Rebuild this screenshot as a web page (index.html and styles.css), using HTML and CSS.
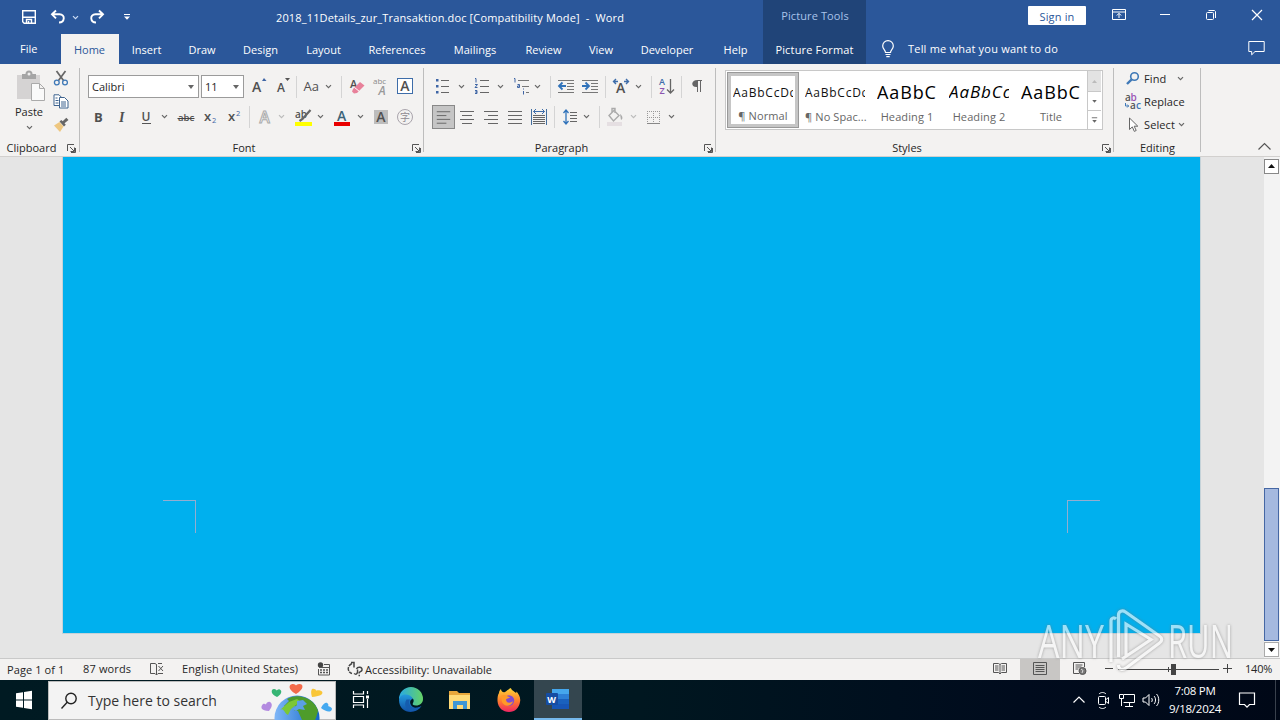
FILE: index.html
```html
<!DOCTYPE html>
<html lang="en">
<head>
<meta charset="utf-8">
<title>2018_11Details_zur_Transaktion.doc - Word</title>
<link rel="stylesheet" href="styles.css">
</head>
<body>
<svg class="defs" width="0" height="0">
  <symbol id="chev" viewBox="0 0 9 9"><path d="M2 3.200 4.500 5.700 7 3.200" fill="none" stroke="currentColor" stroke-width="1.200"/></symbol>
  <symbol id="launch" viewBox="0 0 9 9"><path d="M.5 7V.5H7M3 3l4 4M7.500 3.500v4h-4M8.500 4v4.500H4" fill="none" stroke="#555"/></symbol>
</svg>
<div class="app">
<header class="titlebar">
  <div class="qat">
    <svg width="16" height="16" viewBox="0 0 16 16" fill="none" stroke="#fff" stroke-width="1.400"><path d="M1.700 1.700h12.600v12.600H3.200L1.700 12.800zM1.700 8.300h12.600"/><path d="M5.500 14v-3.500h5V14M7.500 14v-2" /></svg>
    <svg width="16" height="16" viewBox="0 0 16 16" fill="none" stroke="#fff" stroke-width="1.900"><path d="M6 1.500 2 5.300 6 9.300M2.300 5.300H9.500c6.300 0 5.200 8.200-.5 8.200"/></svg>
    <svg class="ch" width="9" height="9"><use href="#chev"/></svg>
    <svg width="16" height="16" viewBox="0 0 16 16" fill="none" stroke="#fff" stroke-width="1.900"><path d="M10 1.500 14 5.300 10 9.300M13.700 5.300H6.500c-6.300 0-5.200 8.200.5 8.200"/></svg>
    <svg width="8" height="8" viewBox="0 0 8 8"><path d="M1 1.500h6" stroke="#fff"/><path d="M1 3.500h6L4 6.800z" fill="#fff"/></svg>
  </div>
  <div class="doc-title">2018_11Details_zur_Transaktion.doc [Compatibility Mode]&nbsp; -&nbsp; Word</div>
  <div class="tools-title">Picture Tools</div>
  <div class="signin"><span>Sign in</span></div>
  <div class="win">
    <svg width="14" height="12" viewBox="0 0 14 12" fill="none" stroke="#fff"><path d="M.5.5h13v10H.5zM.5 3h13M7 9V4.500M4.800 6.500 7 4.300l2.200 2.200"/></svg>
    <svg width="12" height="12" viewBox="0 0 12 12" stroke="#fff"><path d="M1 5.500h10"/></svg>
    <svg width="12" height="12" viewBox="0 0 12 12" fill="none" stroke="#fff"><rect x="1.500" y="3.500" width="7" height="7" rx="1"/><path d="M3.500 1.500h6l1 1v6.500"/></svg>
    <svg width="12" height="12" viewBox="0 0 12 12" stroke="#fff" stroke-width="1.200"><path d="M1 1l10 10M11 1 1 11"/></svg>
  </div>
</header>
<nav class="tabs">
  <span class="file">File</span><span class="active">Home</span><span>Insert</span><span>Draw</span><span>Design</span><span>Layout</span><span>References</span><span>Mailings</span><span>Review</span><span>View</span><span>Developer</span><span>Help</span><span class="ctx">Picture Format</span>
  <svg class="bulb" width="14" height="18" viewBox="0 0 14 18" fill="none" stroke="#fff" stroke-width="1.200"><path d="M4.500 12.500C4.500 10 1.700 9 1.700 5.900a5.300 5.300 0 0 1 10.600 0c0 3.100-2.800 4.100-2.800 6.600zM4.500 14.500h5M5.300 16.600h3.400"/></svg>
  <span class="tell">Tell me what you want to do</span>
  <svg class="comment" width="17" height="16" viewBox="0 0 17 16" fill="none" stroke="#fff"><path d="M.8 1.500h15.400v10H7L3.700 14.800v-3.300H.8z"/></svg>
</nav>
<section class="ribbon">
  <div class="group g-clip">
    <div class="clip">
      <div class="paste">
        <svg width="30" height="32" viewBox="0 0 30 32"><path d="M2 5h23v24H2z" fill="#d5d3d3"/><path d="M7 4h3.500a3.500 3.500 0 0 1 7 0H21v5H7z" fill="#a5a5a5"/><circle cx="14" cy="4" r="1.500" fill="#eee"/><path d="M16.500 13.500h8l5 5v12h-13zM24.500 13.500v5h5" fill="#fafafa" stroke="#aaa"/></svg>
        <span>Paste</span>
        <svg class="ch" width="9" height="9"><use href="#chev"/></svg>
      </div>
      <div class="clip-icons">
        <svg width="16" height="16" viewBox="0 0 16 16" fill="none"><path d="m3.500 1 7 9.500M12.500 1l-7 9.500" stroke="#666" stroke-width="1.700"/><circle cx="3.800" cy="12.500" r="2.400" stroke="#3f79b7" stroke-width="1.300"/><circle cx="12" cy="12.500" r="2.400" stroke="#3f79b7" stroke-width="1.300"/></svg>
        <svg width="16" height="15" viewBox="0 0 16 15" fill="#fff" stroke="#3f648f"><path d="M1 .8h5l3 3v7.700H1z"/><path d="M6.500 3.500h5l3.500 3.500v7H6.500z"/><path d="M2.500 4h2M2.500 6.500h3M2.500 9h3M8 8h5M8 10h5M8 12h5" fill="none"/></svg>
        <svg width="16" height="15" viewBox="0 0 16 15"><path d="M1 8.500 6.500 5l4 4.500L7 15z" fill="#eec780"/><path d="m6.500 4.500 4.500 5 1.800-1.800-1.300-1.400L15.500 3 13.300.8 9.700 4.300 8.300 2.900z" fill="#666"/></svg>
      </div>
    </div>
    <div class="label"><span>Clipboard</span><svg width="9" height="9"><use href="#launch"/></svg></div>
  </div>
  <div class="group g-font">
    <div class="row font1">
      <div class="combo c1"><span>Calibri</span><i></i></div>
      <div class="combo c2"><span>11</span><i></i></div>
      <svg class="ic" viewBox="0 0 24 24"><text x="4" y="18" class="ga" font-size="14">A</text><path d="m14 7 2-3 2.500 3z" fill="#3e65a5"/></svg>
      <svg class="ic" viewBox="0 0 24 24"><text x="5" y="18" class="ga" font-size="12">A</text><path d="M13 4h5l-2.500 3z" fill="#555"/></svg>
      <b class="sep"></b>
      <svg class="ic" viewBox="0 0 24 24"><text x="3.500" y="17" class="ga thin" font-size="13">Aa</text></svg>
      <svg class="ch" width="9" height="9"><use href="#chev"/></svg>
      <b class="sep"></b>
      <svg class="ic" viewBox="0 0 24 24"><text x="5" y="14" class="ga" font-size="11">A</text><path d="m8 15 7-7 4.500 3.500-7.500 7.500-3 .5-2-2z" fill="#e8819a"/><path d="m9.500 13.500 5 4" stroke="#fff"/></svg>
      <svg class="ic" viewBox="0 0 24 24"><text x="4" y="10" fill="#8a8a8a" font-size="8">abc</text><text x="9.500" y="20.500" fill="#999" font-size="12" font-style="italic" font-weight="600">A</text></svg>
      <svg class="ic" viewBox="0 0 24 24"><rect x="4.500" y="4.500" width="15" height="15" fill="#fff" stroke="#3e6da9"/><text x="7.300" y="17" class="ga" font-size="14">A</text></svg>
    </div>
    <div class="row font2">
      <svg class="ic" viewBox="0 0 24 24"><text x="8" y="17" class="ga" font-size="13" style="font-weight:700">B</text></svg>
      <svg class="ic" viewBox="0 0 24 24"><text x="9" y="17" class="ga serif" font-size="14">I</text></svg>
      <svg class="ic" viewBox="0 0 24 24"><text x="7.500" y="16" class="ga" font-size="12">U</text><path d="M8 18.500h9" stroke="#555"/></svg>
      <svg class="ch" width="9" height="9"><use href="#chev"/></svg>
      <svg class="ic" viewBox="0 0 24 24"><text x="4" y="16" class="ga" font-size="9.500">abc</text><path d="M3.500 13.500h17" stroke="#444"/></svg>
      <svg class="ic" viewBox="0 0 24 24"><text x="6" y="16" class="ga" font-size="13">x</text><text x="14" y="18" fill="#3e65a5" font-size="7.500">2</text></svg>
      <svg class="ic" viewBox="0 0 24 24"><text x="6" y="16" class="ga" font-size="13">x</text><text x="14" y="11" fill="#3e65a5" font-size="7.500">2</text></svg>
      <b class="sep"></b>
      <svg class="ic" viewBox="0 0 24 24"><text x="6.500" y="17.500" fill="#fff" stroke="#aaa" font-size="15.500" font-weight="600">A</text></svg>
      <svg class="ch dim" width="9" height="9"><use href="#chev"/></svg>
      <svg class="ic" viewBox="0 0 24 24"><path d="M4 17h17v4H4z" fill="#ff0"/><text x="4" y="13" class="ga" font-size="10">ab</text><path d="m19.500 5-8 9-3 2" fill="none" stroke="#666" stroke-width="2.200"/></svg>
      <svg class="ch" width="9" height="9"><use href="#chev"/></svg>
      <svg class="ic" viewBox="0 0 24 24"><text x="7" y="15.500" fill="#3c6379" font-weight="600" font-size="14">A</text><path d="M4 17h16v4H4z" fill="#e90000"/></svg>
      <svg class="ch" width="9" height="9"><use href="#chev"/></svg>
      <svg class="ic" viewBox="0 0 24 24"><path d="M5 5h14v14H5z" fill="#bdbdbd"/><text x="7.300" y="17" class="ga" font-size="14">A</text></svg>
      <svg class="ic" viewBox="0 0 24 24"><circle cx="12" cy="12" r="7.500" fill="none" stroke="#a9a4ac"/><text x="7" y="16" class="cjk" font-size="10">字</text></svg>
    </div>
    <div class="label"><span>Font</span><svg width="9" height="9"><use href="#launch"/></svg></div>
  </div>
  <div class="group g-para">
    <div class="row para1">
      <svg class="ic" viewBox="0 0 24 24"><path d="M10 6.500h8M10 12.500h8M10 18.500h8" stroke="#666"/><path d="M5 5h2.500v2.500H5zM5 11h2.500v2.500H5zM5 17h2.500v2.500H5z" fill="#3e65a5"/></svg>
      <svg class="ch" width="9" height="9"><use href="#chev"/></svg>
      <svg class="ic" viewBox="0 0 24 24"><path d="M10 6.500h9M10 12.500h9M10 18.500h9" stroke="#666"/><path d="M5 4.500h1v4M5 10.500h2.500L5 13.500h2.500M5 16.500h2v1.500H5.500 7v1.500H5" fill="none" stroke="#3e65a5"/></svg>
      <svg class="ch" width="9" height="9"><use href="#chev"/></svg>
      <svg class="ic" viewBox="0 0 24 24"><path d="M9 6.500h11M13 12.500h7M17 18.500h3" stroke="#777"/><path d="M5 4.500h1v4M8.500 10.500h2v3h-2v-1.500h2M14.500 14.500v1M14.500 17v3.500" fill="none" stroke="#3e65a5"/></svg>
      <svg class="ch" width="9" height="9"><use href="#chev"/></svg>
      <b class="sep"></b>
      <svg class="ic" viewBox="0 0 24 24"><path d="M4 6.500h16M13 9.500h7M13 12.500h7M13 15.500h7M4 18.500h16" stroke="#777"/><path d="M12 12H5M8.500 8.500 5 12l3.500 3.500" fill="none" stroke="#3173ba" stroke-width="1.800"/></svg>
      <svg class="ic" viewBox="0 0 24 24"><path d="M4 6.500h16M13 9.500h7M13 12.500h7M13 15.500h7M4 18.500h16" stroke="#777"/><path d="M4 12h7M7.500 8.500 11 12l-3.500 3.500" fill="none" stroke="#3173ba" stroke-width="1.800"/></svg>
      <b class="sep"></b>
      <svg class="ic" viewBox="0 0 24 24"><text x="7" y="19" class="ga" font-size="14">A</text><path d="M9 7.500H4.500M7 5 4.500 7.500 7 10M15 7.500h4.500M17 5l2.500 2.500L17 10" fill="none" stroke="#3e6da9" stroke-width="1.400"/></svg>
      <svg class="ch" width="9" height="9"><use href="#chev"/></svg>
      <b class="sep"></b>
      <svg class="ic" viewBox="0 0 24 24"><g font-size="9" font-weight="600"><text x="4" y="11" fill="#3e6da9">A</text><text x="4.500" y="20" fill="#8b55b0">Z</text></g><path d="M15.500 5v14M12 15.500l3.500 3.500 3.500-3.500" fill="none" stroke="#666" stroke-width="1.300"/></svg>
      <b class="sep"></b>
      <svg class="ic" viewBox="0 0 24 24"><path d="M12 6.500h5M12.500 6v12M15.500 6v12" stroke="#666"/><path d="M12.500 6v7C5.500 14 5.500 6 12.500 6z" fill="#666"/></svg>
    </div>
    <div class="row para2">
      <svg class="ic on" viewBox="0 0 24 24"><path d="M5 6.500h14M5 10.500h10M5 14.500h14M5 18.500h10" stroke="#666"/></svg>
      <svg class="ic" viewBox="0 0 24 24"><path d="M5 6.500h14M7 10.500h10M5 14.500h14M7 18.500h10" stroke="#666"/></svg>
      <svg class="ic" viewBox="0 0 24 24"><path d="M5 6.500h14M9 10.500h10M5 14.500h14M9 18.500h10" stroke="#666"/></svg>
      <svg class="ic" viewBox="0 0 24 24"><path d="M5 6.500h14M5 10.500h14M5 14.500h14M5 18.500h14" stroke="#666"/></svg>
      <svg class="ic" viewBox="0 0 24 24"><path d="M4.500 4v16M19.500 4v16" stroke="#446f9f"/><path d="M6 10.500h12M6 12.500h12M6 14.500h12M6 16.500h12M6 18.500h12" stroke="#666"/><path d="M6.500 6.500h11M9 4 6.500 6.500 9 9M15 4l2.500 2.500L15 9" fill="none" stroke="#3e6da9"/></svg>
      <b class="sep"></b>
      <svg class="ic" viewBox="0 0 24 24"><path d="M12 7.500h7M12 10.500h7M12 13.500h7M12 16.500h7" stroke="#666"/><path d="M8 5v14M5.500 8 8 5l2.500 3M5.500 16 8 19l2.500-3" fill="none" stroke="#3173ba" stroke-width="1.300"/></svg>
      <svg class="ch" width="9" height="9"><use href="#chev"/></svg>
      <b class="sep"></b>
      <svg class="ic" viewBox="0 0 24 24"><path d="M4 17h15v4H4z" fill="#e5dfe2"/><path d="m6 10.500 5-5 5 5-5.500 5.500zM9 8V3.500h3V8" fill="none" stroke="#aaa" stroke-width="1.400"/><path d="M17 9c3 2 3 5 1 6z" fill="#aaa"/></svg>
      <svg class="ch dim" width="9" height="9"><use href="#chev"/></svg>
      <svg class="ic" viewBox="0 0 24 24"><path d="M6.500 6v11M12.500 6v11M18.500 6v11M6 6.500h13M6 12.500h13" stroke="#999" stroke-dasharray="1 1"/><path d="M6 18.500h13" stroke="#888"/></svg>
      <svg class="ch" width="9" height="9"><use href="#chev"/></svg>
    </div>
    <div class="label"><span>Paragraph</span><svg width="9" height="9"><use href="#launch"/></svg></div>
  </div>
  <div class="group g-styles">
    <div class="gallery">
      <div class="style sel"><p class="n">AaBbCcDc</p><small>¶ Normal</small></div>
      <div class="style"><p class="n">AaBbCcDc</p><small>¶ No Spac...</small></div>
      <div class="style"><p class="h">AaBbC</p><small>Heading 1</small></div>
      <div class="style"><p class="h it">AaBbCc</p><small>Heading 2</small></div>
      <div class="style"><p class="h">AaBbC</p><small>Title</small></div>
      <div class="gscroll">
        <svg class="off" viewBox="0 0 13 20"><path d="M4 12h5L6.500 9z" fill="#bbb"/></svg>
        <svg viewBox="0 0 13 20"><path d="M4 9h5l-2.500 3z" fill="#666"/></svg>
        <svg viewBox="0 0 13 20"><path d="M3.500 7.500h6" stroke="#666"/><path d="M4 10h5l-2.500 3z" fill="#666"/></svg>
      </div>
    </div>
    <div class="label"><span>Styles</span><svg width="9" height="9"><use href="#launch"/></svg></div>
  </div>
  <div class="group g-edit">
    <div class="edit">
      <svg width="16" height="16" viewBox="0 0 16 16" fill="none" stroke="#3f79b7"><circle cx="9.500" cy="5.500" r="3.800" stroke-width="1.600"/><path d="M6.700 8.300 2 13" stroke-width="2.400"/></svg><span>Find</span><svg class="ch fc" width="9" height="9"><use href="#chev"/></svg>
      <svg class="rep" width="18" height="18" viewBox="0 0 18 18" font-size="10" font-weight="600"><text x="1" y="8" fill="#555">a</text><text x="6.500" y="8" fill="#9a55b5">b</text><text x="6" y="16" fill="#555">a</text><text x="12" y="16" fill="#3f79b7">c</text><path d="M1.500 10v3h3M3.200 11.500 4.700 13l-1.500 1.500" fill="none" stroke="#3f79b7"/></svg><span>Replace</span><i></i>
      <svg width="16" height="16" viewBox="0 0 16 16"><path d="M4.500 1v11.500l2.800-2.600 2 4.500 1.900-.9-2-4.300h3.600z" fill="#fff" stroke="#666"/></svg><span>Select</span><svg class="ch sc" width="9" height="9"><use href="#chev"/></svg>
    </div>
    <div class="label"><span>Editing</span></div>
  </div>
  <svg class="collapse" width="15" height="9" viewBox="0 0 15 9"><path d="M1.500 7.500l6-6 6 6" fill="none" stroke="#555" stroke-width="1.200"/></svg>
</section>
<main class="doc">
  <div class="page"><i class="crop l"></i><i class="crop r"></i></div>
  <div class="scroll">
    <svg width="15" height="15" viewBox="0 0 15 15"><rect x=".5" y=".5" width="14" height="14" fill="#fff" stroke="#888"/><path d="M4 9h7L7.500 5z" fill="#111"/></svg>
    <div class="thumb"></div>
    <svg width="15" height="15" viewBox="0 0 15 15"><rect x=".5" y=".5" width="14" height="14" fill="#fff" stroke="#aaa"/><path d="M4 6h7l-3.500 4z" fill="#111"/></svg>
  </div>
</main>
<footer class="status">
  <span class="s1">Page 1 of 1</span><span class="s2">87 words</span>
  <svg class="s3" width="16" height="14" viewBox="0 0 16 14" fill="none" stroke="#555"><path d="M7.500 2.500 6 1.500H1.500v10H6l1.500 1.500zv10.500l1.500-1.500h5M9 1.500h4M9.500 4l4.500 5M14 4 9.500 9"/></svg>
  <span class="s4">English (United States)</span>
  <svg class="s5" width="14" height="14" viewBox="0 0 14 14"><circle cx="3.500" cy="3" r="2.700" fill="#444"/><path d="M7 2.500h5.500v10.500H1.500V7M2 5.500h10" fill="none" stroke="#555"/><path d="M3 8h9M3 10.500h9" stroke="#555" stroke-width="1.500" stroke-dasharray="2 1"/></svg>
  <svg class="s6" width="17" height="16" viewBox="0 0 17 16" fill="none" stroke="#444" stroke-width="1.500"><path d="M5 2.500C-.5 5 .5 11.500 5 12.500" stroke-dasharray="4 1"/><path d="M4 1.500h3v5M9.500 8c1-2.500 6-2.500 5.500 1-.5 2-3 1.500-3 3.500M11.500 14.500h1.500M7 12.500c3 2 4-1 3.500-4"/></svg>
  <span class="s7">Accessibility: Unavailable</span>
  <div class="views">
    <div><svg width="14" height="13" viewBox="0 0 14 13" fill="none" stroke="#555"><path d="M7 2.500 5.500 1.500h-5v9h5L7 12l1.500-1.500h5v-9h-5zV12M2 4h3.500M2 6h3.500M2 8h3.500M8.500 4H12M8.500 6H12M8.500 8H12"/></svg></div>
    <div class="cur"><svg width="14" height="13" viewBox="0 0 14 13" fill="none" stroke="#555"><path d="M.5.500h13v12H.5zM2.500 3.500h9M2.500 5.500h9M2.500 7.500h9M2.500 9.500h9"/></svg></div>
    <div><svg width="14" height="14" viewBox="0 0 14 14" fill="none" stroke="#555"><path d="M6 11.500H.5v-11h11V5M2.500 3h7M2.500 5h6M2.500 7h3"/><circle cx="9.500" cy="9" r="3.500" fill="#777"/><path d="m8 7 2 1.500L9 11" stroke="#ddd"/></svg></div>
  </div>
  <svg class="zoom" width="128" height="14" viewBox="0 0 128 14"><path d="M1 6.500h8M119 6.500h9M123.500 2v9M14 7.500h101M64.500 5v5" stroke="#444"/><path d="M67 2h5v11h-5z" fill="#444"/></svg>
  <span class="pct">140%</span>
</footer>
<div class="taskbar">
  <svg class="start" width="48" height="40" viewBox="0 0 48 40"><path d="m16 13.200 7-1v7.300h-7zM24 12l8-1.200v8.700h-8zM16 20.500h7v7.300l-7-1zM24 20.500h8v8.700L24 28z" fill="#fff"/></svg>
  <div class="search">
    <svg width="18" height="18" viewBox="0 0 18 18" fill="none" stroke="#222" stroke-width="1.400"><circle cx="11" cy="6.500" r="5.200"/><path d="M7.200 10.300 1.500 16.500"/></svg>
    <span>Type here to search</span>
    <svg class="earth" width="74" height="38" viewBox="0 0 74 38">
      <defs><linearGradient id="ea"><stop offset="0" stop-color="#80b7f7"/><stop offset="1" stop-color="#1266c9"/></linearGradient></defs>
      <circle cx="37" cy="36" r="22.500" fill="url(#ea)"/><path d="M27 17c4-3 12-4 19-1 6 2 11 8 12 13-1 4-2 7-3 9H42l-4-9c-6 0-5-3-2-5l-5-1-4 3-3-2 5-5z" fill="#4e9c2b"/><path d="m29 20 8-3 4 3-5 3-5 4-3 6c-4-2-4-8-8-5z" fill="#7cc736"/><path d="m37 19 6-1 4 4-4 2 2 4-6-1-3 2-4-2 5-4z" fill="#5b9fe6"/>
      <path d="M36 12c-9-5-7-10-3-10 2 0 3 1.500 3 1.500S37 2 39.500 2c4 0 5 5-3.500 10z" fill="#f36b4b"/>
      <path d="M17 15c-7-3-6-8-3-8 2 0 2.500 1.500 2.500 1.500S19 6 20.500 8c2 2 0 5-3.500 7z" fill="#36b574"/>
      <path d="M9 29c-8 0-9-4-6-7 2-1 3 .5 3 .5S7 19 10 20c3 2 2 5-1 9z" fill="#b38ae0"/>
      <path d="M52 15c-2-7 0-9 2-8 2 0 2 1.500 2 1.500s4-1 6 1c2 3-3 5-10 5.500z" fill="#f9c638"/>
      <path d="M61 26c3-6 6-6 7-4 1 1 0 2 0 2s4 1 4 3c-1 4-6 3-11-1z" fill="#45a9f0"/>
    </svg>
  </div>
  <div class="apps">
    <div><svg width="18" height="18" viewBox="0 0 18 18" fill="none" stroke="#fff" stroke-width="1.200"><path d="M1.500 0v3h10V0M1.500 17v-3h10v3M1.500 5.500h10v6h-10zM15.500 0v3M15.500 8v9"/><path d="M14 4.500h3v3h-3z" fill="#fff" stroke="none"/></svg></div>
    <div><svg width="26" height="26" viewBox="0 0 26 26"><defs><linearGradient id="e1"><stop offset="0" stop-color="#28a9e4"/><stop offset="1" stop-color="#65d366"/></linearGradient><linearGradient id="e2" x2="0" y2="1"><stop offset="0" stop-color="#249bdd"/><stop offset="1" stop-color="#104fa5"/></linearGradient></defs><path d="M1 12A12 12 0 0 1 25 12c0 4-3 6.500-7 6.500-3 0-4-1-3-2.500C18 11 11 7 1 12z" fill="url(#e1)"/><path d="M1 13C2 6 12 6 15 12c-4 0-4 7 1 8.500 3 .8 5 0 7.500-1.500C17 29 1 26 1 13z" fill="url(#e2)"/><path d="M8.500 12.500C5 18 9 25 15 24c3-.5 6-2 8-5-8 5-14-.5-11-6.500z" fill="#155cae"/></svg></div>
    <div><svg width="24" height="22" viewBox="0 0 24 22"><path d="M1 2h8l2 2h11v15H1z" fill="#e8a73b"/><path d="M1 6h21v14H1z" fill="#ffda77"/><path d="M5 12h14v8h-4v-4H9v4H5z" fill="#3f97d5"/></svg></div>
    <div><svg width="26" height="26" viewBox="0 0 26 26"><defs><linearGradient id="ff" x2="0" y2="1"><stop offset="0" stop-color="#ffd638"/><stop offset=".55" stop-color="#ff7b2e"/><stop offset="1" stop-color="#ef2464"/></linearGradient></defs><path d="M3 6c0-2 1-3 2-4 0 2 2 4 4 3 2-1 3-3 6-4 0 2 3 3 5 5 1-1 0-2 0-2 3 3 5 7 4 11-1 6-5 10-11 10S2 21 1.500 14c0-3 0-6 1.500-8z" fill="url(#ff)"/><circle cx="13" cy="13.500" r="5.200" fill="#824bd0"/><path d="M5 9c4-3 6 1 9 1-1 2-4 1-4 3 1 4 5 3 7 1-1 6-9 6-11 1z" fill="#ff9a28"/></svg></div>
    <div class="open"><svg width="24" height="22" viewBox="0 0 24 22"><path d="M6 1h17v20H6z" fill="#1755b5"/><path d="M6 1h17v5H6z" fill="#45a7ed"/><path d="M6 6h17v5H6z" fill="#2d80d7"/><path d="M6 11h17v5H6z" fill="#1a61bd"/><rect x="0" y="5" width="12" height="12" rx="1" fill="#164da3"/><text x="1.300" y="14.500" fill="#fff" font-size="9" font-weight="700">W</text></svg></div>
  </div>
  <div class="tray">
    <svg width="24" height="20" viewBox="0 0 24 20" fill="none" stroke="#fff" stroke-width="1.200"><path d="m6.500 12.500 5.500-5.500 5.500 5.500"/></svg>
    <svg width="24" height="20" viewBox="0 0 24 20" fill="none" stroke="#fff"><rect x="7.500" y="6.500" width="7" height="8" rx="1"/><path d="m15 9.500 2.500-2v6L15 11.500M8 4c2-2 5-2 7 0M8 17c2 2 5 2 7 0"/></svg>
    <svg width="24" height="20" viewBox="0 0 24 20" fill="none" stroke="#fff"><path d="M9 4.500h10.500v8H8.500M14.500 13v3M10 16.500h8M4.500 4.500h4v4h-4zM6.500 9v7"/></svg>
    <svg width="24" height="20" viewBox="0 0 24 20" fill="none" stroke="#fff"><path d="M4 8h2.500L10 4.500v11L6.500 12H4zM12.500 8c1 1 1 3 0 4M15 6c2 2 2 6 0 8M17.500 4c3 3 3 9 0 12"/></svg>
    <div class="clock"><span>7:08 PM</span><span>9/18/2024</span></div>
    <svg class="note" width="18" height="18" viewBox="0 0 18 18" fill="none" stroke="#fff" stroke-width="1.200"><path d="M1.500 2h15v11.500h-5L9 16.200 6.500 13.500h-5z"/></svg>
    <i class="peek"></i>
  </div>
</div>
<svg class="mark" width="204" height="70" viewBox="0 0 204 70">
  <g fill="#fff"><text x="4" y="51" font-size="46" textLength="66" lengthAdjust="spacingAndGlyphs">ANY</text><text x="134" y="51" font-size="46" textLength="65" lengthAdjust="spacingAndGlyphs">RUN</text></g>
  <path d="M77 55V14c0-3 3-4 5-2M84.500 50V8c0-4 4-5 7-3l34 24c3 2 3 5 0 7L92 61c-4 3-7.500 1-7.500-3M92 50V17l25 15.500L88 52" fill="none" stroke="#fff" stroke-width="3.200"/>
</svg>
</div>
</body>
</html>
```

FILE: styles.css
```css
* { box-sizing: border-box; }
body { margin: 0; width: 1280px; height: 720px; overflow: hidden; font: 11px/16px "Open Sans", "Noto Sans", sans-serif; color: #262626; }
svg { display: block; flex: none; }
svg text { font-family: "Open Sans", "Noto Sans", sans-serif; }
svg .ga { fill: #505050; font-weight: 600; }
svg .thin { font-weight: 400; }
svg .serif { font-family: "Liberation Serif", serif; font-style: italic; font-weight: 700; }
svg .cjk { font-family: "Noto Sans CJK SC", sans-serif; fill: #8f8a92; }
span, small, p { white-space: nowrap; }
.defs { position: absolute; }
.app { position: relative; display: grid; grid-template-rows: 34px 30px 93px 501px 22px 40px; height: 720px; }
.ch { color: #666; }
.ch.dim { color: #bbb; }

.titlebar { display: grid; grid-template-columns: 276px 487px 103px 162px 58px 194px; background: #2b579a; color: #fff; }
.titlebar > div { height: 34px; }
.qat { display: flex; align-items: center; padding-left: 21px; }
.qat svg:nth-child(2) { margin-left: 13px; }
.qat .ch { margin-left: 5px; color: #cbdcf5; }
.qat svg:nth-child(4) { margin-left: 9px; }
.qat svg:nth-child(5) { margin-left: 18px; }
.doc-title { line-height: 35px; letter-spacing: .145px; white-space: nowrap; }
.tools-title { background: #204478; color: #a9c3ea; text-align: center; line-height: 32px; padding-left: 1px; letter-spacing: .1px; }
.signin { grid-column: 5; padding-top: 6px; }
.signin span { display: block; height: 19px; line-height: 21px; background: #fff; color: #2b579a; text-align: center; border-radius: 1px; letter-spacing: .15px; }
.win { display: grid; grid-template-columns: repeat(4, 46px); justify-items: center; align-items: center; padding: 0 0 4px 10px; }

.tabs { display: grid; grid-template-columns: 61px 57px 57px 54px 63px 63px 84px 72px 65px 50px 82px 55px 103px 42px 150px 190px 32px; background: #2b579a; color: #fff; text-align: center; line-height: 31px; }
.tabs .file { text-align: left; padding-left: 20px; line-height: 29px; }
.tabs .active { background: #f3f2f1; color: #2b579a; margin-right: -1px; padding-right: 1px; }
.tabs .ctx { background: #204478; letter-spacing: .17px; }
.bulb { margin: 6px 0 0 15px; }
.tabs .tell { text-align: left; line-height: 29px; letter-spacing: .2px; }
.comment { grid-column: 17; margin-top: 6px; }

.ribbon { display: grid; grid-template-columns: 80px 344px 292px 398px 87px 1fr; background: #f3f2f1; border-bottom: 1px solid #d2d0ce; }
.group { display: flex; flex-direction: column; background: linear-gradient(#bdbdbd, #bdbdbd) right 4px / 1px 84px no-repeat; background-position: right 4px; height: 92px; }
.label { margin-top: auto; height: 16px; display: grid; grid-template-columns: 1fr 12px; align-items: center; text-align: center; }
.label svg { justify-self: start; }
.g-font .label span, .g-styles .label span { padding-right: 4px; }
.g-para .label span { padding-right: 5px; }
.row { display: grid; align-items: center; height: 31px; }
.ic { width: 24px; height: 24px; }
.on { background: #c5c5c5; outline: 1px solid #888; outline-offset: -1px; width: 23px; margin-left: 1px; }
.sep { width: 1px; height: 22px; background: #d4d4d4; justify-self: end; margin-right: 3px; }
.clip { display: flex; padding: 5px 0 0 14px; height: 70px; }
.paste { width: 30px; display: flex; flex-direction: column; align-items: center; }
.paste svg:first-child { margin: 1px 0 0 2px; }
.paste span { margin-top: 2px; }
.paste .ch { margin-top: 3px; }
.clip-icons { margin-left: 9px; display: grid; gap: 8px; align-content: start; padding-top: 1px; }
.g-clip .label { grid-template-columns: 67px 12px; }
.g-clip .label span { padding-right: 4px; }
.font1, .font2 { margin-left: 8px; }
.font1 { margin-top: 7px; grid-template-columns: 113px 47px 24px 24px 4px 24px 10px 11px 24px 24px 24px; }
.font2 { margin: -1px 0 0 6px; grid-template-columns: 24px 24px 26px 14px 24px 24px 24px 7px 24px 14px 25px 14px 26px 13px 24px 24px; }
.font1 .ic, .para1 .ic, .para1 .ch, .font1 .ch { margin-top: -1px; }
.combo { height: 23px; border: 1px solid #9b9b9b; background: #fff; display: flex; justify-content: space-between; align-items: center; padding: 0 4px 0 3px; }
.combo i { border: 3px solid transparent; border-top: 4px solid #666; border-bottom: 0; }
.c1 { width: 111px; }
.c2 { width: 43px; }
.g-para .row { margin-left: 7px; }
.para1 { margin-top: 7px; grid-template-columns: 26px 13px 26px 13px 24px 11px 10px 24px 24px 7px 25px 12px 9px 24px 6px 24px; }
.g-para .para2 { margin-top: -1px; grid-template-columns: 24px 24px 24px 24px 24px 7px 24px 12px 9px 26px 12px 26px 12px; }
.gallery { display: grid; grid-template-columns: repeat(5, 72px) 15px; margin: 6px 0 0 9px; height: 60px; width: 378px; background: #fff; border: 1px solid #c8c8c8; padding-left: 1px; }
.style { display: flex; flex-direction: column; padding: 10px 6px 0; overflow: hidden; text-align: center; }
.style p { margin: 0; height: 24px; line-height: 24px; overflow: hidden; color: #111; }
.style .n { font-size: 12px; letter-spacing: .75px; text-align: left; }
.style .h { font-size: 18px; letter-spacing: .9px; color: #000; text-align: left; margin-top: -1px; height: 25px; }
.style .it { font-style: italic; font-size: 17px; font-weight: 500; }
.style small { font-size: 11px; color: #666; margin-top: 4px; line-height: 16px; letter-spacing: .1px; }
.sel { border: 4px solid #c6c6c6; padding: 5px 2px 0; outline: 1px solid #999; outline-offset: -1px; margin-top: 1px; height: 56px; }
.gscroll { border-left: 1px solid #c8c8c8; display: grid; grid-template-rows: 21px 19px 18px; }
.gscroll svg { width: 13px; height: 100%; border-bottom: 1px solid #c8c8c8; }
.gscroll svg:last-child { border-bottom: 0; }
.gscroll .off { background: #e3e3e3; }
.edit { display: grid; grid-template-columns: 20px 45px 15px; grid-auto-rows: 23px; align-items: center; margin: 3px 0 0 10px; letter-spacing: .1px; }
.edit .rep { margin-left: 0; }
.edit .fc { margin-left: -13px; }
.edit .sc { margin-left: -12px; }
.edit .fc, .edit .sc { margin-left: -13px; }
.edit .sc { margin-left: -12px; }
.edit svg:first-child, .edit svg:nth-child(7) { margin-left: 1px; }
.g-edit .label { grid-template-columns: 1fr; }
.collapse { align-self: end; margin: 0 0 5px 56px; }

.doc { background: #e5e5e5; display: flex; }
.page { margin-left: 62px; width: 1139px; height: 477px; background: #00b0ee; border: 1px solid #c5d2d8; border-top: 0; display: flex; justify-content: space-between; padding: 343px 100px 0; }
.crop { width: 33px; height: 33px; border-top: 1px solid #94add0; }
.crop.l { border-right: 1px solid #94add0; }
.crop.r { border-left: 1px solid #94add0; }
.scroll { margin-left: 63px; width: 16px; background: #f3f3f3; padding-top: 2px; display: flex; flex-direction: column; }
.thumb { margin-top: 314px; width: 15px; height: 153px; margin-bottom: 1px; background: #a5b9df; border: 1px solid #4567a4; }

.status { display: flex; align-items: center; background: #f3f2f1; border-top: 1px solid #c9c9c9; padding-bottom: 1px; }
.s1 { margin-left: 7px; width: 76px; padding-top: 2px; letter-spacing: .1px; }
.s2 { width: 66px; letter-spacing: .15px; }
.s4 { margin-left: 17px; width: 135px; letter-spacing: .08px; }
.s6 { margin-left: 16px; }
.s7 { margin-left: 1px; width: 130px; padding-top: 2px; }
.views { margin-left: auto; display: flex; height: 21px; margin-bottom: -1px; }
.views div { width: 40px; display: grid; place-items: center; padding-bottom: 2px; }
.views .cur { background: #c8c6c4; }
.zoom { margin-left: 4px; }
.pct { width: 28px; margin: 0 7px 0 13px; letter-spacing: -.2px; }

.taskbar { display: flex; background: linear-gradient(90deg, #001a22, #001720 50%, #000b1d 80%, #000817); color: #fff; height: 40px; }
.search { width: 288px; margin-top: 1px; height: 39px; background: #f3f3f3; border: 1px solid #bbb; display: flex; align-items: center; padding-left: 11px; color: #333; font-size: 14px; }
.search span { margin-left: 10px; width: 130px; letter-spacing: 0; }
.earth { margin-left: 42px; }
.apps { display: flex; padding-left: 0; }
.apps div { width: 49px; display: grid; place-items: center; }
.apps div:not(.open):not(:first-child) svg { margin-left: 2px; }
.apps .open { width: 48px; background: #34464f; border-bottom: 2px solid #76b9ed; margin-left: 2px; }
.tray { margin-left: auto; display: flex; align-items: center; width: 213px; }
.clock { width: 64px; display: grid; grid-auto-rows: 18px; text-align: center; margin-top: 1px; font-size: 11.500px; letter-spacing: -.25px; }
.note { margin-left: 11px; }
.peek { width: 1px; height: 40px; margin-left: 19px; background: #39414d; }
.mark { position: absolute; left: 1034px; top: 607px; opacity: .62; filter: drop-shadow(0 0 1.500px #777); }
```
